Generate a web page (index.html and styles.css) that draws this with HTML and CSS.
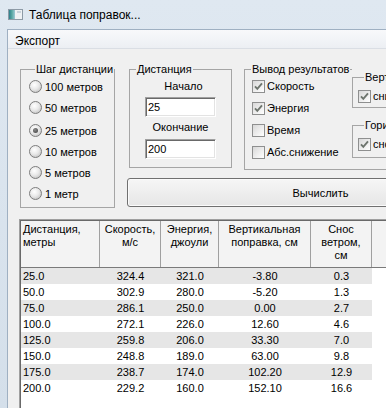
FILE: index.html
```html
<!DOCTYPE html>
<html lang="ru">
<head>
  <meta charset="UTF-8">
  <meta name="viewport" content="width=device-width, initial-scale=1.0">
  <title>Таблица поправок</title>
  <link rel="stylesheet" href="styles.css">
</head>
<body>
  <div class="titlebar">
    <svg class="app-icon" width="15" height="11" viewBox="0 0 15 11">
      <defs>
        <linearGradient id="ico" x1="0" y1="0" x2="1" y2="0">
          <stop offset="0" stop-color="#2f7f8c"/>
          <stop offset="0.5" stop-color="#5aa9a4"/>
          <stop offset="1" stop-color="#9fc9d6"/>
        </linearGradient>
      </defs>
      <rect x="0.5" y="0.5" width="14" height="10" fill="#eef1f4" stroke="#8d9aa6"/>
      <rect x="1" y="1" width="6" height="9" fill="url(#ico)"/>
      <rect x="9" y="2" width="4" height="2" fill="#c9d3dc"/>
    </svg>
    <span class="title">Таблица поправок...</span>
  </div>

  <div class="client">
    <div class="menubar"><span class="menu-item">Экспорт</span></div>

    <div class="top">
      <fieldset class="group step">
        <legend>Шаг дистанции</legend>
        <label class="radio"><span class="dot"></span>100 метров</label>
        <label class="radio"><span class="dot"></span>50 метров</label>
        <label class="radio shifted"><span class="dot on"></span>25 метров</label>
        <label class="radio"><span class="dot"></span>10 метров</label>
        <label class="radio"><span class="dot"></span>5 метров</label>
        <label class="radio"><span class="dot"></span>1 метр</label>
      </fieldset>

      <div class="right">
        <div class="groups">
          <fieldset class="group dist">
            <legend>Дистанция</legend>
            <div class="dist-body">
              <div class="lbl lbl-start">Начало</div>
              <input class="textbox" type="text" value="25">
              <div class="lbl lbl-end">Окончание</div>
              <input class="textbox textbox-end" type="text" value="200">
            </div>
          </fieldset>

          <fieldset class="group output">
            <legend>Вывод результатов</legend>
            <div class="output-body">
              <div class="checks">
                <label class="check"><span class="box"><svg width="11" height="11" viewBox="0 0 11 11"><path d="M2 5.3 L4.3 7.8 L9 2.4" fill="none" stroke="#6e756e" stroke-width="1.9"/></svg></span>Скорость</label>
                <label class="check"><span class="box"><svg width="11" height="11" viewBox="0 0 11 11"><path d="M2 5.3 L4.3 7.8 L9 2.4" fill="none" stroke="#6e756e" stroke-width="1.9"/></svg></span>Энергия</label>
                <label class="check"><span class="box"></span>Время</label>
                <label class="check"><span class="box"></span>Абс.снижение</label>
              </div>
              <div class="sub">
                <fieldset class="group small vert">
                  <legend>Вертикальная поправка</legend>
                  <label class="check"><span class="box"><svg width="11" height="11" viewBox="0 0 11 11"><path d="M2 5.3 L4.3 7.8 L9 2.4" fill="none" stroke="#6e756e" stroke-width="1.9"/></svg></span>снижение</label>
                </fieldset>
                <fieldset class="group small horz">
                  <legend>Горизонтальная поправка</legend>
                  <label class="check"><span class="box"><svg width="11" height="11" viewBox="0 0 11 11"><path d="M2 5.3 L4.3 7.8 L9 2.4" fill="none" stroke="#6e756e" stroke-width="1.9"/></svg></span>снос ветром</label>
                </fieldset>
              </div>
            </div>
          </fieldset>
        </div>
        <button class="calc">Вычислить</button>
      </div>
    </div>

    <div class="grid">
      <div class="grid-inner">
        <div class="head">
          <div class="hc c1">Дистанция,<br>метры</div>
          <div class="hc c2">Скорость,<br>м/с</div>
          <div class="hc c3">Энергия,<br>джоули</div>
          <div class="hc c4">Вертикальная<br>поправка, см</div>
          <div class="hc c5">Снос<br>ветром,<br>см</div>
        </div>
        <div class="row alt"><div class="c1">25.0</div><div class="c2">324.4</div><div class="c3">321.0</div><div class="c4">-3.80</div><div class="c5">0.3</div></div>
        <div class="row"><div class="c1">50.0</div><div class="c2">302.9</div><div class="c3">280.0</div><div class="c4">-5.20</div><div class="c5">1.3</div></div>
        <div class="row alt"><div class="c1">75.0</div><div class="c2">286.1</div><div class="c3">250.0</div><div class="c4">0.00</div><div class="c5">2.7</div></div>
        <div class="row"><div class="c1">100.0</div><div class="c2">272.1</div><div class="c3">226.0</div><div class="c4">12.60</div><div class="c5">4.6</div></div>
        <div class="row alt"><div class="c1">125.0</div><div class="c2">259.8</div><div class="c3">206.0</div><div class="c4">33.30</div><div class="c5">7.0</div></div>
        <div class="row"><div class="c1">150.0</div><div class="c2">248.8</div><div class="c3">189.0</div><div class="c4">63.00</div><div class="c5">9.8</div></div>
        <div class="row alt"><div class="c1">175.0</div><div class="c2">238.7</div><div class="c3">174.0</div><div class="c4">102.20</div><div class="c5">12.9</div></div>
        <div class="row"><div class="c1">200.0</div><div class="c2">229.2</div><div class="c3">160.0</div><div class="c4">152.10</div><div class="c5">16.6</div></div>
      </div>
    </div>
  </div>
</body>
</html>
```

FILE: styles.css
```css
html, body {
  margin: 0;
  padding: 0;
}
body {
  width: 386px;
  height: 408px;
  overflow: hidden;
  background: linear-gradient(180deg, #dfe8f1 0%, #d4dfea 100%);
  font-family: "Liberation Sans", Arial, sans-serif;
  font-size: 11px;
  color: #000;
}

/* заголовок окна */
.titlebar {
  height: 29px;
  display: flex;
  align-items: center;
  gap: 6px;
  padding-left: 8px;
  box-sizing: border-box;
  font-size: 12px;
}
.app-icon {
  display: block;
}

.client {
  margin-left: 7px;
  height: 379px;
  border-left: 1px solid #9fb0c2;
  border-top: 1px solid #9fb0c2;
  background: #f0f0f0;
  overflow: hidden;
}
.menubar {
  height: 19px;
  box-sizing: border-box;
  padding: 4px 0 0 7px;
  line-height: 15px;
  font-size: 12px;
  background: linear-gradient(180deg, #f8f9fb 0%, #eceff3 100%);
  border-bottom: 1px solid #dadee4;
}

.top {
  display: flex;
  align-items: flex-start;
  margin-top: 14px;
  padding-left: 12px;
}

/* групповые рамки */
.group {
  flex: none;
  margin: 0;
  padding: 0;
  min-width: 0;
  box-sizing: border-box;
  border: 1px solid #a5a5a5;
}
.group legend {
  margin-left: 6px;
  padding: 0 1px;
  line-height: 13px;
  font-size: 11px;
  white-space: nowrap;
}

.step {
  width: 95px;
  padding: 0 0 3px 8px;
}
.radio {
  display: flex;
  align-items: center;
  gap: 3px;
  height: 21px;
  white-space: nowrap;
}
.radio.shifted {
  margin-top: 2px;
}
.dot {
  width: 13px;
  height: 13px;
  box-sizing: border-box;
  border-radius: 50%;
  border: 1px solid #7d7d7d;
  background: radial-gradient(circle at 40% 35%, #ffffff 0%, #e9e9e9 45%, #b5b5b5 100%);
  display: flex;
  align-items: center;
  justify-content: center;
  flex: none;
}
.dot.on::after {
  content: "";
  width: 5px;
  height: 5px;
  border-radius: 50%;
  background: radial-gradient(circle at 40% 35%, #8a8a8a 0%, #3c3c3c 100%);
}

.right {
  flex: none;
  margin-left: 12px;
}
.groups {
  display: flex;
  align-items: flex-start;
}

.dist {
  width: 103px;
  margin-left: 2px;
}
.dist-body {
  display: flex;
  flex-direction: column;
  align-items: center;
  padding-bottom: 8px;
}
.lbl {
  line-height: 13px;
  margin-top: 4px;
}
.lbl-start {
  margin-left: 6px;
}
.textbox {
  width: 71px;
  height: 20px;
  box-sizing: border-box;
  margin: 4px 0 0;
  padding: 0 0 0 2px;
  font-family: "Liberation Sans", Arial, sans-serif;
  font-size: 11px;
  color: #000;
  background: #fff;
  border: 1px solid;
  border-color: #a0a0a0 #ffffff #ffffff #a0a0a0;
  box-shadow: inset 1px 1px 0 #696969, inset -1px -1px 0 #e3e3e3;
  outline: none;
}
.textbox-end {
  margin-top: 5px;
}

.output {
  width: 300px;
  margin-left: 12px;
  padding-bottom: 6px;
}
.output-body {
  display: flex;
  align-items: flex-start;
}
.checks {
  width: 107px;
  box-sizing: border-box;
  padding-left: 7px;
  margin-top: -1px;
}
.check {
  display: flex;
  align-items: center;
  gap: 2px;
  height: 22px;
  white-space: nowrap;
}
.box {
  width: 13px;
  height: 13px;
  box-sizing: border-box;
  border: 1px solid #8e8f8f;
  background: linear-gradient(135deg, #d8d8d8 0%, #f4f4f4 70%, #ffffff 100%);
  flex: none;
}
.box svg {
  display: block;
}

.sub {
  flex: none;
  width: 160px;
  margin-top: -8px;
  padding-top: 3px;
  background: #f0f0f0;
}
.small {
  width: 160px;
  padding-left: 5px;
}
.small .check {
  height: 14px;
  margin-top: 5px;
}
.vert {
  height: 37px;
}
.horz {
  height: 39px;
  margin-top: 11px;
}

.calc {
  display: block;
  width: 387px;
  height: 29px;
  margin-top: 8px;
  padding: 0;
  font-family: "Liberation Sans", Arial, sans-serif;
  font-size: 11px;
  color: #000;
  border: 1px solid #707070;
  border-radius: 3px;
  background: linear-gradient(180deg, #f6f6f6 0%, #eeeeee 50%, #e6e6e6 100%);
  box-shadow: inset 0 0 0 1px #fbfbfb;
}

/* таблица */
.grid {
  margin: 11px 0 0 11px;
  height: 200px;
  border-left: 1px solid #a0a0a0;
  border-top: 1px solid #a0a0a0;
}
.grid-inner {
  height: 100%;
  background: #fff;
  border-left: 1px solid #696969;
  border-top: 1px solid #696969;
}
.head {
  display: flex;
  height: 47px;
  box-sizing: border-box;
  background: #f3f3f3;
  border-bottom: 1px solid #7a7a7a;
}
.hc {
  height: 46px;
  box-sizing: border-box;
  padding-top: 2px;
  line-height: 13px;
  text-align: center;
  border-right: 1px solid #a0a0a0;
}
.head .c1 {
  text-align: left;
  padding-left: 2px;
}
.row {
  display: flex;
  width: 351px;
  height: 16px;
  line-height: 16px;
}
.row.alt {
  background: #e6e6e6;
}
.row div {
  text-align: center;
  white-space: nowrap;
}
.row .c1 {
  text-align: left;
  padding-left: 2px;
}
.c1, .c2, .c3, .c4, .c5 {
  flex: none;
  box-sizing: border-box;
}
.c1 { width: 79px; }
.c2 { width: 61px; }
.c3 { width: 58px; }
.c4 { width: 92px; }
.c5 { width: 61px; }
```
